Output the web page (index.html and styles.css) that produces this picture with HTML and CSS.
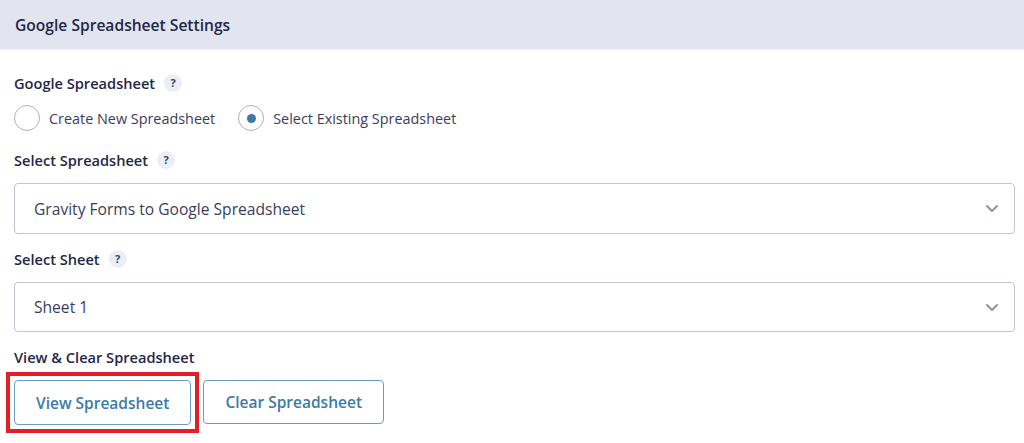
FILE: index.html
```html
<!DOCTYPE html>
<html lang="en">
<head>
<meta charset="utf-8">
<title>Google Spreadsheet Settings</title>
<link rel="stylesheet" href="styles.css">
</head>
<body>
<div class="panel">
  <div class="panel-header">Google Spreadsheet Settings</div>
  <div class="panel-body">
    <div class="field">
      <div class="label">Google Spreadsheet <span class="help">?</span></div>
      <div class="radios">
        <label class="radio"><span class="circle"></span>Create New Spreadsheet</label>
        <label class="radio"><span class="circle checked"></span>Select Existing Spreadsheet</label>
      </div>
    </div>
    <div class="field">
      <div class="label">Select Spreadsheet <span class="help">?</span></div>
      <div class="select">
        <span>Gravity Forms to Google Spreadsheet</span>
        <svg class="chev" width="14" height="9" viewBox="0 0 14 9"><path d="M2 2l5 5 5-5" fill="none" stroke="#8f91b0" stroke-width="2" stroke-linecap="round" stroke-linejoin="round"/></svg>
      </div>
    </div>
    <div class="field">
      <div class="label">Select Sheet <span class="help">?</span></div>
      <div class="select short">
        <span>Sheet 1</span>
        <svg class="chev" width="14" height="9" viewBox="0 0 14 9"><path d="M2 2l5 5 5-5" fill="none" stroke="#8f91b0" stroke-width="2" stroke-linecap="round" stroke-linejoin="round"/></svg>
      </div>
    </div>
    <div class="field">
      <div class="label">View &amp; Clear Spreadsheet</div>
      <div class="buttons">
        <div class="highlight"><button class="btn tall">View Spreadsheet</button></div>
        <button class="btn">Clear Spreadsheet</button>
      </div>
    </div>
  </div>
</div>
</body>
</html>
```
FILE: styles.css
```css
* { box-sizing: border-box; }
html, body { margin: 0; padding: 0; background: #fff; }
body { font-family: "Open Sans", "Noto Sans", sans-serif; color: #242748; width: 1024px; height: 443px; overflow: hidden; }
.panel-header {
  height: 50px;
  background: #e2e5ef;
  border-bottom: 1px solid #eceef4;
  display: flex;
  align-items: center;
  padding-left: 15px;
  font-size: 15.6px;
  font-weight: 600;
  color: #242748;
}
.panel-body { padding: 23px 9px 0 14px; }
.field { margin-bottom: 15px; }
.label {
  font-size: 14.6px;
  font-weight: 600;
  line-height: 20px;
  display: flex;
  align-items: center;
  gap: 9px;
  color: #242748;
}
.help {
  width: 18px; height: 18px; border-radius: 50%;
  background: #eceef6;
  color: #3b3f63;
  font-size: 11px; font-weight: 700;
  display: inline-flex; align-items: center; justify-content: center;
}
.radios { display: flex; gap: 23px; margin-top: 12px; margin-bottom: 19px; }
.radio {
  display: flex; align-items: center; gap: 9px;
  font-size: 14.4px; color: #3a3d5c;
}
.circle {
  width: 26px; height: 26px; border-radius: 50%;
  border: 1px solid #adafca;
  background: #fff;
  display: inline-flex; align-items: center; justify-content: center;
}
.circle.checked::after {
  content: ""; width: 9px; height: 9px; border-radius: 50%; background: #3e7aa7;
}
.select {
  margin-top: 13px;
  height: 51px;
  border: 1px solid #c3c4d6;
  border-radius: 4px;
  display: flex; align-items: center; justify-content: space-between;
  padding: 0 15px 0 19px;
  font-size: 15.6px; color: #3a3d5c;
}
.select.short { height: 50px; }
.buttons { display: flex; align-items: flex-start; gap: 4px; margin-top: 13px; }
.highlight {
  border: 4px solid #e41e26;
  margin: -8px 0 0 -8px;
  padding: 4px;
}
.btn {
  height: 44px;
  padding: 0 21px;
  background: #fff;
  border: 1px solid #6d9cc3;
  border-radius: 4px;
  font-family: inherit;
  font-size: 15.5px;
  font-weight: 600;
  color: #3e7aa7;
}
.btn.tall { height: 45px; }
```
